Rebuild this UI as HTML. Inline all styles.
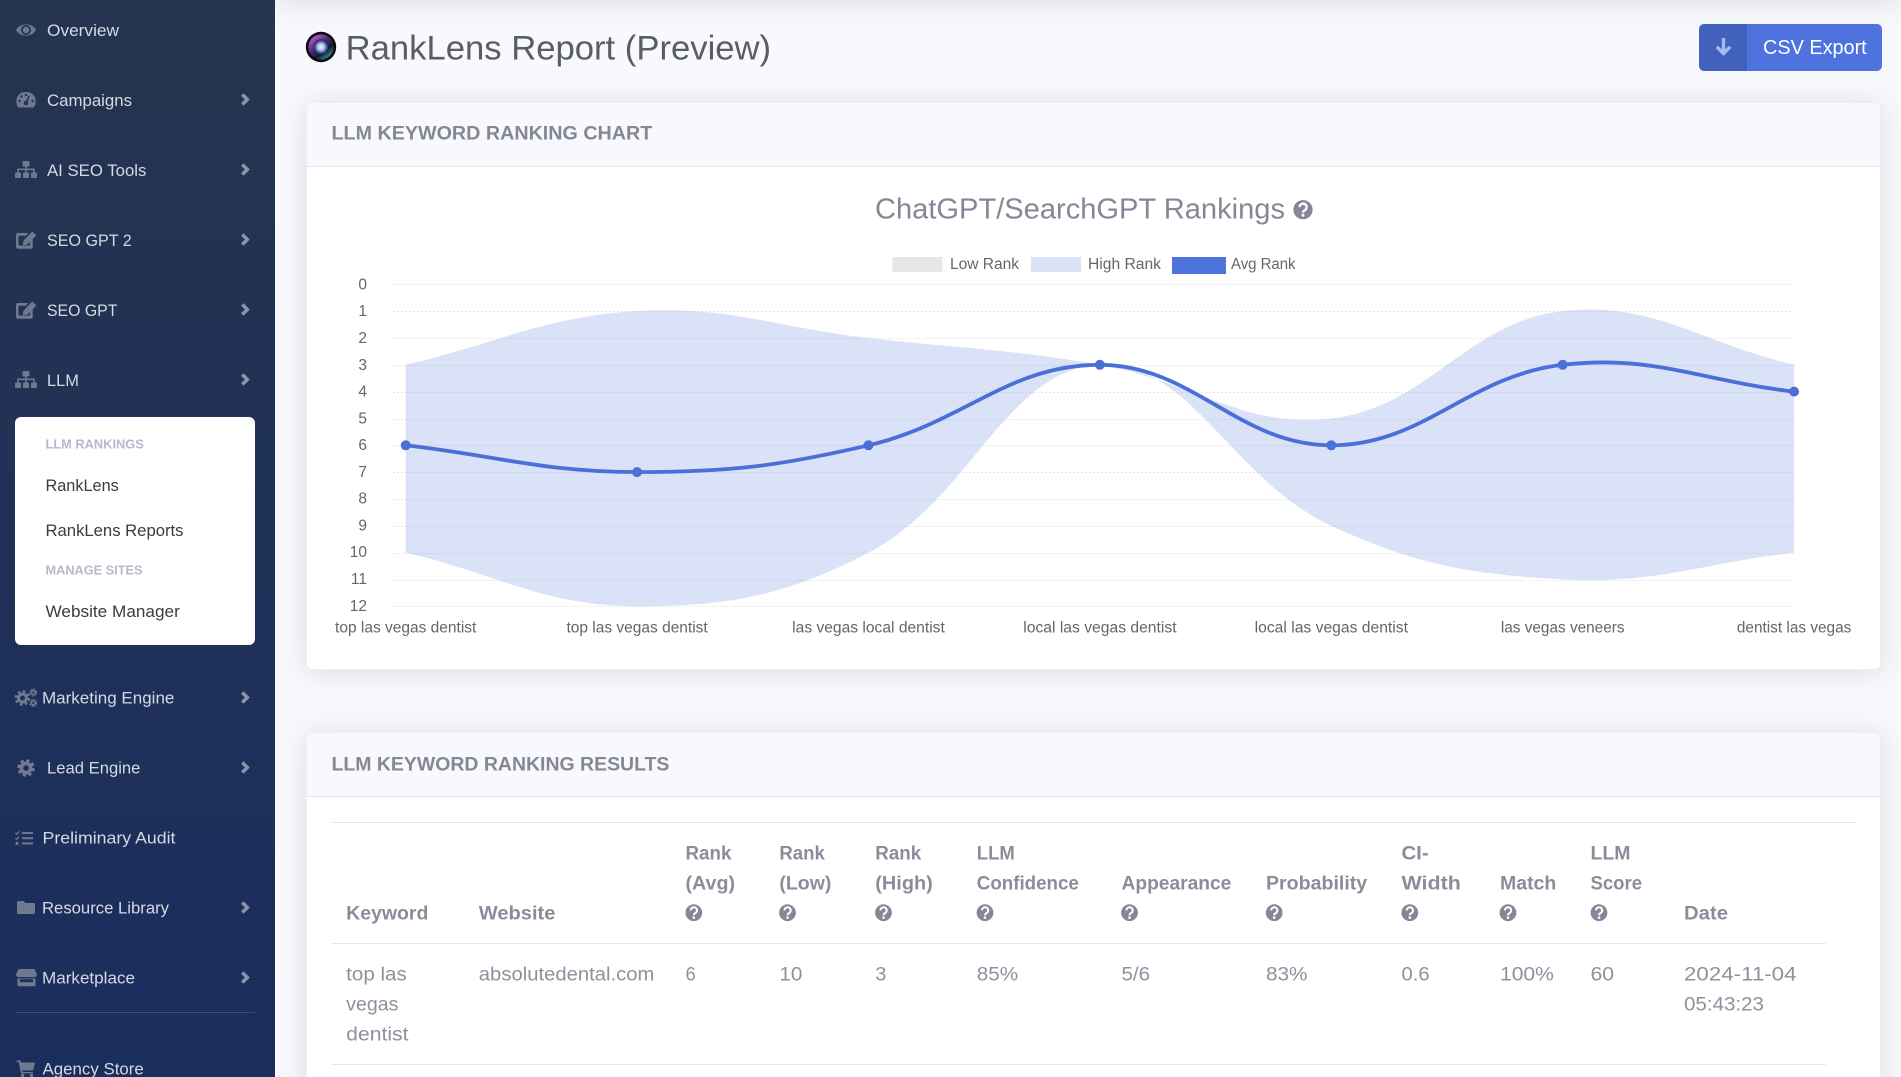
<!DOCTYPE html>
<html lang="en"><head><meta charset="utf-8"><title>RankLens Report (Preview)</title>
<style>
html,body{margin:0;padding:0;width:1901px;height:1077px;overflow:hidden;background:#f8f9fc;font-family:"Liberation Sans",sans-serif}
#page{position:relative;width:1901px;height:1077px;overflow:hidden;background:#f8f9fc}
.abs{position:absolute}
#side{left:0;top:0;width:275px;height:1077px;background:linear-gradient(180deg,#25344f 0%,#1a2e5e 100%)}
#topsh{left:275px;top:-60px;width:1626px;height:60px;box-shadow:0 2px 28px rgba(58,59,69,.15)}
#sub{left:15px;top:417px;width:240px;height:228px;background:#fff;border-radius:6px}
#div{left:15px;top:1012px;width:240px;height:1px;background:#3d4f78}
.card{left:306px;width:1575px;background:#fff;border:1px solid #eceef4;border-radius:6px;box-sizing:border-box;box-shadow:0 2.4px 28px rgba(58,59,69,.15);overflow:hidden}
.card .h{height:64px;box-sizing:border-box;background:#f8f9fc;border-bottom:1px solid #e3e6f0}
#c1{top:102px;height:568px}
#c2{top:732px;height:380px}
#btn{left:1699px;top:24px;width:183px;height:47px;background:#4e73df;border-radius:5px;overflow:hidden}
#btn div{width:48px;height:47px;background:rgba(0,0,0,.15)}
.ln{background:#e3e6f0;height:1px}
svg{position:absolute;left:0;top:0}
text{font-family:"Liberation Sans",sans-serif}
.n{font-size:16.5px;fill:#d5d9e2}
.m{font-size:16.5px;fill:#3a3b45}
.l{font-size:13px;font-weight:700;fill:#b7b9cc}
.c{font-size:15.5px;fill:#666}
.t{font-size:19px;fill:#8e909e}
.b{font-size:19px;font-weight:700;fill:#8a8c9a}
.ch{font-size:19px;font-weight:700;fill:#858796}
</style></head><body>
<div id="page">
<div class="abs" id="topsh"></div>
<div class="abs" id="side"></div>
<div class="abs" id="sub"></div>
<div class="abs" id="div"></div>
<div class="abs" id="btn"><div></div></div>
<div class="abs card" id="c1"><div class="h"></div></div>
<div class="abs card" id="c2"><div class="h"></div></div>
<div class="abs ln" style="left:331px;top:822px;width:1525px"></div>
<div class="abs ln" style="left:331px;top:943px;width:1495px"></div>
<div class="abs ln" style="left:331px;top:1064px;width:1495px"></div>
<svg width="1901" height="1077" viewBox="0 0 1901 1077" xmlns="http://www.w3.org/2000/svg">
<defs>
<radialGradient id="lens" cx="50%" cy="50%" r="50%">
<stop offset="0" stop-color="#eaf2fc"/><stop offset=".42" stop-color="#b0c6ea"/><stop offset=".72" stop-color="#5565a8"/><stop offset="1" stop-color="#1e1a3c"/>
</radialGradient>
<linearGradient id="ring" x1="0.1" y1="0.05" x2="0.85" y2="1">
<stop offset="0" stop-color="#d05ee0"/><stop offset=".42" stop-color="#4a2a78"/><stop offset=".68" stop-color="#141a34"/><stop offset="1" stop-color="#35b4c4"/>
</linearGradient>
</defs>

<!-- sidebar text -->
<text class="n" x="47" y="35.8" textLength="72" lengthAdjust="spacingAndGlyphs">Overview</text>
<text class="n" x="47" y="105.8" textLength="85" lengthAdjust="spacingAndGlyphs">Campaigns</text>
<text class="n" x="47" y="175.8" textLength="99.4" lengthAdjust="spacingAndGlyphs">AI SEO Tools</text>
<text class="n" x="47" y="245.8" textLength="84.7" lengthAdjust="spacingAndGlyphs">SEO GPT 2</text>
<text class="n" x="47" y="315.8" textLength="70.4" lengthAdjust="spacingAndGlyphs">SEO GPT</text>
<text class="n" x="47" y="385.8" textLength="32" lengthAdjust="spacingAndGlyphs">LLM</text>
<text class="l" x="45.5" y="448.5" textLength="98.3" lengthAdjust="spacingAndGlyphs">LLM RANKINGS</text>
<text class="m" x="45.5" y="490.8" textLength="73.3" lengthAdjust="spacingAndGlyphs">RankLens</text>
<text class="m" x="45.5" y="535.8" textLength="138" lengthAdjust="spacingAndGlyphs">RankLens Reports</text>
<text class="l" x="45.5" y="574.5" textLength="97" lengthAdjust="spacingAndGlyphs">MANAGE SITES</text>
<text class="m" x="45.5" y="616.8" textLength="134.3" lengthAdjust="spacingAndGlyphs">Website Manager</text>
<text class="n" x="42" y="703.5" textLength="132.4" lengthAdjust="spacingAndGlyphs">Marketing Engine</text>
<text class="n" x="47" y="773.5" textLength="93.4" lengthAdjust="spacingAndGlyphs">Lead Engine</text>
<text class="n" x="42.5" y="843.5" textLength="133" lengthAdjust="spacingAndGlyphs">Preliminary Audit</text>
<text class="n" x="42" y="913.5" textLength="127" lengthAdjust="spacingAndGlyphs">Resource Library</text>
<text class="n" x="42" y="983.5" textLength="93" lengthAdjust="spacingAndGlyphs">Marketplace</text>
<text class="n" x="42.5" y="1074.5" textLength="101.3" lengthAdjust="spacingAndGlyphs">Agency Store</text>

<!-- chevrons -->
<g fill="none" stroke="#8b94a8" stroke-width="3.5">
<path d="M242.3 94.5 L247.3 99.5 L242.3 104.5"/>
<path d="M242.3 164.5 L247.3 169.5 L242.3 174.5"/>
<path d="M242.3 234.5 L247.3 239.5 L242.3 244.5"/>
<path d="M242.3 304.5 L247.3 309.5 L242.3 314.5"/>
<path d="M242.3 374.5 L247.3 379.5 L242.3 384.5"/>
<path d="M242.3 692.5 L247.3 697.5 L242.3 702.5"/>
<path d="M242.3 762.5 L247.3 767.5 L242.3 772.5"/>
<path d="M242.3 902.5 L247.3 907.5 L242.3 912.5"/>
<path d="M242.3 972.5 L247.3 977.5 L242.3 982.5"/>
</g>

<!-- sidebar icons -->
<g fill="#6d7a90">
<!-- eye -->
<path d="M16 30 C20 22.5 32 22.5 36 30 C32 37.5 20 37.5 16 30Z"/>
<circle cx="26" cy="30" r="5" fill="#243450"/><circle cx="26" cy="30" r="3.2"/>
<!-- gauge -->
<path d="M18.5 107.5 C14.5 103 15.5 92 26 92 C36.5 92 37.5 103 33.5 107.5Z"/>
<g fill="#243450"><circle cx="26" cy="103" r="2.3"/><circle cx="19.5" cy="101" r="1.2"/><circle cx="21.5" cy="96.5" r="1.2"/><circle cx="26" cy="95" r="1.2"/><circle cx="32.5" cy="101" r="1.2"/></g>
<path d="M25.3 103 L28.5 95.5 L29.8 96 L27 103.5Z" fill="#243450"/>
<!-- sitemap -->
<g><rect x="22.5" y="161" width="7" height="5.5" rx="1"/><rect x="15" y="172.5" width="6" height="5.5" rx="1"/><rect x="23" y="172.5" width="6" height="5.5" rx="1"/><rect x="31" y="172.5" width="6" height="5.5" rx="1"/><path d="M25.2 166h1.6v2.5H34.8v4H33.2v-2.4H26.8v2.4H25.2v-2.4H18.8v2.4H17.2v-4H25.2z"/></g>
<g><rect x="22.5" y="371" width="7" height="5.5" rx="1"/><rect x="15" y="382.5" width="6" height="5.5" rx="1"/><rect x="23" y="382.5" width="6" height="5.5" rx="1"/><rect x="31" y="382.5" width="6" height="5.5" rx="1"/><path d="M25.2 376h1.6v2.5H34.8v4H33.2v-2.4H26.8v2.4H25.2v-2.4H18.8v2.4H17.2v-4H25.2z"/></g>
<!-- edit -->
<path d="M16 235 a2 2 0 0 1 2-2 h10.5 l-2.6 2.7 h-7.4 v9.8 h11.5 v-5 l2.7-2.8 v9.1 a2 2 0 0 1-2 2 h-12.7 a2 2 0 0 1-2-2z"/>
<path d="M23.5 240.5 l8.8-9 l4 4 l-8.8 9 l-4.7 .8z"/>
<path d="M16 305 a2 2 0 0 1 2-2 h10.5 l-2.6 2.7 h-7.4 v9.8 h11.5 v-5 l2.7-2.8 v9.1 a2 2 0 0 1-2 2 h-12.7 a2 2 0 0 1-2-2z"/>
<path d="M23.5 310.5 l8.8-9 l4 4 l-8.8 9 l-4.7 .8z"/>
<!-- cogs -->
<circle cx="22.5" cy="698" r="5.5"/>
<circle cx="22.5" cy="698" r="6.3" fill="none" stroke="#6d7a90" stroke-width="3" stroke-dasharray="2.6 2.35"/>
<circle cx="22.5" cy="698" r="2.4" fill="#1f3058"/>
<circle cx="33.3" cy="692.5" r="2.5"/>
<circle cx="33.3" cy="692.5" r="3.2" fill="none" stroke="#6d7a90" stroke-width="1.8" stroke-dasharray="1.4 1.1"/>
<circle cx="33.3" cy="692.5" r="1.1" fill="#1f3058"/>
<circle cx="33.3" cy="703" r="2.5"/>
<circle cx="33.3" cy="703" r="3.2" fill="none" stroke="#6d7a90" stroke-width="1.8" stroke-dasharray="1.4 1.1"/>
<circle cx="33.3" cy="703" r="1.1" fill="#1f3058"/>
<!-- cog -->
<circle cx="26" cy="768" r="6.5"/>
<circle cx="26" cy="768" r="7.3" fill="none" stroke="#6d7a90" stroke-width="3" stroke-dasharray="3.2 2.53"/>
<circle cx="26" cy="768" r="2.8" fill="#1d2f5a"/>
<!-- tasks -->
<rect x="22" y="832" width="11" height="2"/><rect x="22" y="837.2" width="11" height="2"/><rect x="22" y="842.4" width="11" height="2"/>
<path d="M15.5 833 l1.2 1.2 2.6-2.8" fill="none" stroke="#6d7a90" stroke-width="1.2"/><path d="M15.5 838.2 l1.2 1.2 2.6-2.8" fill="none" stroke="#6d7a90" stroke-width="1.2"/><circle cx="17" cy="843.4" r="1.6"/>
<!-- folder -->
<path d="M17 902.5 a1.5 1.5 0 0 1 1.5-1.5 h5 l2 2 h8 a1.5 1.5 0 0 1 1.5 1.5 v8 a1.5 1.5 0 0 1-1.5 1.5 h-15 a1.5 1.5 0 0 1-1.5-1.5z"/>
<!-- store -->
<path d="M18.5 969 h16 l2.5 5.5 q0 2.6-3.4 2.6 h-14.2 q-3.4 0-3.4-2.6z"/>
<path d="M17.5 978.5 h18 v6.5 a1.2 1.2 0 0 1-1.2 1.2 h-15.6 a1.2 1.2 0 0 1-1.2-1.2z"/>
<rect x="20" y="979.2" width="13" height="3" fill="#1c2f5b"/>
<!-- cart -->
<path d="M17 1060.5 h3.4 l.6 2 h14 l-1.9 8 h-11 l.3 1.5 h10.5 v1.4 h-12 l-2.3-11.5 h-2.6z"/>
<circle cx="22.5" cy="1075.5" r="1.7"/><circle cx="31.5" cy="1075.5" r="1.7"/>
</g>

<!-- header -->
<circle cx="321" cy="47" r="15.2" fill="#0a0a10"/>
<circle cx="321" cy="47" r="12.6" fill="url(#ring)"/>
<circle cx="321" cy="47" r="7.6" fill="url(#lens)"/>
<text x="345.6" y="59.6" font-size="34" fill="#5a5c69" textLength="425.5" lengthAdjust="spacingAndGlyphs">RankLens Report (Preview)</text>
<path d="M1723.5 38 V53.5 M1716.8 46.8 l6.7 6.7 6.7-6.7" fill="none" stroke="#a7b9ef" stroke-width="3.4"/>
<text x="1763" y="54" font-size="20" fill="#fff" textLength="103.7" lengthAdjust="spacingAndGlyphs">CSV Export</text>

<!-- card 1 -->
<text class="ch" x="331.5" y="139.7" textLength="320.8" lengthAdjust="spacingAndGlyphs">LLM KEYWORD RANKING CHART</text>
<text x="875" y="218.7" font-size="29" fill="#858796" textLength="410" lengthAdjust="spacingAndGlyphs">ChatGPT/SearchGPT Rankings</text>
<g transform="translate(1303 209.7)"><circle r="9.6" fill="#858796"/><path d="M-3.4-2.6a3.5 3.5 0 1 1 5.3 3c-1.2.7-1.9 1.2-1.9 2.6" fill="none" stroke="#fff" stroke-width="2.3"/><circle cy="5.6" r="1.5" fill="#fff"/></g>

<!-- legend -->
<rect x="892.5" y="257" width="50" height="15" fill="#e6e6e6"/>
<text class="c" x="950" y="269" textLength="69" lengthAdjust="spacingAndGlyphs">Low Rank</text>
<rect x="1031" y="257" width="50" height="15" fill="#d9e2f7"/>
<text class="c" x="1088" y="269" textLength="73" lengthAdjust="spacingAndGlyphs">High Rank</text>
<rect x="1172" y="257" width="54" height="17" fill="#4e73df"/>
<text class="c" x="1231" y="269" textLength="64.5" lengthAdjust="spacingAndGlyphs">Avg Rank</text>

<!-- grid -->
<g stroke="#e6e6e6" stroke-width="1" stroke-dasharray="2 2">
<path d="M393 284.5H1794M393 311.5H1794M393 338.5H1794M393 365.5H1794M393 392.5H1794M393 419.5H1794M393 445.5H1794M393 472.5H1794M393 499.5H1794M393 526.5H1794M393 553.5H1794M393 580.5H1794M393 606.5H1794"/>
</g>
<!-- y labels -->
<g text-anchor="end">
<text class="c" x="367" y="289.3">0</text><text class="c" x="367" y="316">1</text><text class="c" x="367" y="343">2</text><text class="c" x="367" y="369.8">3</text><text class="c" x="367" y="396.5">4</text><text class="c" x="367" y="423.3">5</text><text class="c" x="367" y="450">6</text><text class="c" x="367" y="476.8">7</text><text class="c" x="367" y="503.6">8</text><text class="c" x="367" y="530.5">9</text><text class="c" x="367" y="557.2">10</text><text class="c" x="367" y="584">11</text><text class="c" x="367" y="610.8">12</text>
</g>
<!-- x labels -->
<g text-anchor="middle">
<text class="c" x="405.7" y="632.3" textLength="141.3" lengthAdjust="spacingAndGlyphs">top las vegas dentist</text>
<text class="c" x="637.1" y="632.3" textLength="141.3" lengthAdjust="spacingAndGlyphs">top las vegas dentist</text>
<text class="c" x="868.5" y="632.3" textLength="152.6" lengthAdjust="spacingAndGlyphs">las vegas local dentist</text>
<text class="c" x="1099.9" y="632.3" textLength="153.3" lengthAdjust="spacingAndGlyphs">local las vegas dentist</text>
<text class="c" x="1331.3" y="632.3" textLength="153.3" lengthAdjust="spacingAndGlyphs">local las vegas dentist</text>
<text class="c" x="1562.7" y="632.3" textLength="123.7" lengthAdjust="spacingAndGlyphs">las vegas veneers</text>
<text class="c" x="1794.1" y="632.3" textLength="114.5" lengthAdjust="spacingAndGlyphs">dentist las vegas</text>
</g>
<!-- range fill -->
<path fill="#466fd6" fill-opacity=".2" d="M405.7 364.8 C498.3 343.3 543.7 316.5 637.1 311.1 C728.8 305.8 775.9 327.3 868.5 338 C961.1 348.7 1008.3 348.9 1099.9 364.8 C1193.4 381.1 1242.1 428.9 1331.3 418.5 C1427.2 407.4 1466.8 322.2 1562.7 311.1 C1651.9 300.7 1701.5 343.3 1794.1 364.8 L1794.1 552.6 C1701.5 563.3 1654.3 584.7 1562.7 579.4 C1469.2 574 1415.9 565 1331.3 525.8 C1230.8 479.2 1189.9 359.6 1099.9 364.8 C1004.7 370.3 971.5 498.8 868.5 552.6 C786.4 595.4 729.7 606.3 637.1 606.3 C544.5 606.3 498.3 574.1 405.7 552.6 Z"/>
<!-- avg line -->
<path fill="none" stroke="#4a6fd8" stroke-width="3.8" d="M405.7 445.3 C498.3 456 544.5 472.1 637.1 472.1 C729.7 472.1 778.3 466.2 868.5 445.3 C963.4 423.3 1007.3 364.8 1099.9 364.8 C1192.5 364.8 1238.7 445.3 1331.3 445.3 C1423.9 445.3 1467.8 375.8 1562.7 364.8 C1652.9 354.3 1701.5 380.9 1794.1 391.6"/>
<g fill="#4a6fd8">
<circle cx="405.7" cy="445.3" r="5"/><circle cx="637.1" cy="472.1" r="5"/><circle cx="868.5" cy="445.3" r="5"/><circle cx="1099.9" cy="364.8" r="5"/><circle cx="1331.3" cy="445.3" r="5"/><circle cx="1562.7" cy="364.8" r="5"/><circle cx="1794.1" cy="391.6" r="5"/>
</g>

<!-- card 2 -->
<text class="ch" x="331.5" y="770.6" textLength="337.9" lengthAdjust="spacingAndGlyphs">LLM KEYWORD RANKING RESULTS</text>
<!-- table head -->
<text class="b" x="346.2" y="919.3" textLength="82.2" lengthAdjust="spacingAndGlyphs">Keyword</text>
<text class="b" x="478.8" y="919.3" textLength="76.6" lengthAdjust="spacingAndGlyphs">Website</text>
<text class="b" x="685.5" y="859.3" textLength="45.9" lengthAdjust="spacingAndGlyphs">Rank</text>
<text class="b" x="685.5" y="889.3" textLength="49.5" lengthAdjust="spacingAndGlyphs">(Avg)</text>
<text class="b" x="779.4" y="859.3" textLength="45.4" lengthAdjust="spacingAndGlyphs">Rank</text>
<text class="b" x="779.4" y="889.3" textLength="52" lengthAdjust="spacingAndGlyphs">(Low)</text>
<text class="b" x="875.3" y="859.3" textLength="45.9" lengthAdjust="spacingAndGlyphs">Rank</text>
<text class="b" x="875.3" y="889.3" textLength="57.5" lengthAdjust="spacingAndGlyphs">(High)</text>
<text class="b" x="976.8" y="859.3" textLength="38" lengthAdjust="spacingAndGlyphs">LLM</text>
<text class="b" x="976.8" y="889.3" textLength="102" lengthAdjust="spacingAndGlyphs">Confidence</text>
<text class="b" x="1121.5" y="889.3" textLength="109.8" lengthAdjust="spacingAndGlyphs">Appearance</text>
<text class="b" x="1266" y="889.3" textLength="101.2" lengthAdjust="spacingAndGlyphs">Probability</text>
<text class="b" x="1401.5" y="859.3" textLength="27.1" lengthAdjust="spacingAndGlyphs">CI-</text>
<text class="b" x="1401.5" y="889.3" textLength="59.3" lengthAdjust="spacingAndGlyphs">Width</text>
<text class="b" x="1500" y="889.3" textLength="56.3" lengthAdjust="spacingAndGlyphs">Match</text>
<text class="b" x="1590.5" y="859.3" textLength="39.9" lengthAdjust="spacingAndGlyphs">LLM</text>
<text class="b" x="1590.5" y="889.3" textLength="51.5" lengthAdjust="spacingAndGlyphs">Score</text>
<text class="b" x="1684" y="919.3" textLength="44" lengthAdjust="spacingAndGlyphs">Date</text>
<!-- ? icons -->
<g transform="translate(693.8 912.7)"><circle r="8.4" fill="#858796"/><path d="M-3-2.3a3.1 3.1 0 1 1 4.7 2.6c-1 .6-1.7 1-1.7 2.3" fill="none" stroke="#fff" stroke-width="2"/><circle cy="4.9" r="1.3" fill="#fff"/></g>
<g transform="translate(787.5 912.7)"><circle r="8.4" fill="#858796"/><path d="M-3-2.3a3.1 3.1 0 1 1 4.7 2.6c-1 .6-1.7 1-1.7 2.3" fill="none" stroke="#fff" stroke-width="2"/><circle cy="4.9" r="1.3" fill="#fff"/></g>
<g transform="translate(883.5 912.7)"><circle r="8.4" fill="#858796"/><path d="M-3-2.3a3.1 3.1 0 1 1 4.7 2.6c-1 .6-1.7 1-1.7 2.3" fill="none" stroke="#fff" stroke-width="2"/><circle cy="4.9" r="1.3" fill="#fff"/></g>
<g transform="translate(985 912.7)"><circle r="8.4" fill="#858796"/><path d="M-3-2.3a3.1 3.1 0 1 1 4.7 2.6c-1 .6-1.7 1-1.7 2.3" fill="none" stroke="#fff" stroke-width="2"/><circle cy="4.9" r="1.3" fill="#fff"/></g>
<g transform="translate(1129.5 912.7)"><circle r="8.4" fill="#858796"/><path d="M-3-2.3a3.1 3.1 0 1 1 4.7 2.6c-1 .6-1.7 1-1.7 2.3" fill="none" stroke="#fff" stroke-width="2"/><circle cy="4.9" r="1.3" fill="#fff"/></g>
<g transform="translate(1274.2 912.7)"><circle r="8.4" fill="#858796"/><path d="M-3-2.3a3.1 3.1 0 1 1 4.7 2.6c-1 .6-1.7 1-1.7 2.3" fill="none" stroke="#fff" stroke-width="2"/><circle cy="4.9" r="1.3" fill="#fff"/></g>
<g transform="translate(1409.8 912.7)"><circle r="8.4" fill="#858796"/><path d="M-3-2.3a3.1 3.1 0 1 1 4.7 2.6c-1 .6-1.7 1-1.7 2.3" fill="none" stroke="#fff" stroke-width="2"/><circle cy="4.9" r="1.3" fill="#fff"/></g>
<g transform="translate(1508 912.7)"><circle r="8.4" fill="#858796"/><path d="M-3-2.3a3.1 3.1 0 1 1 4.7 2.6c-1 .6-1.7 1-1.7 2.3" fill="none" stroke="#fff" stroke-width="2"/><circle cy="4.9" r="1.3" fill="#fff"/></g>
<g transform="translate(1599 912.7)"><circle r="8.4" fill="#858796"/><path d="M-3-2.3a3.1 3.1 0 1 1 4.7 2.6c-1 .6-1.7 1-1.7 2.3" fill="none" stroke="#fff" stroke-width="2"/><circle cy="4.9" r="1.3" fill="#fff"/></g>
<!-- table row -->
<text class="t" x="346.2" y="980.3" textLength="60.6" lengthAdjust="spacingAndGlyphs">top las</text>
<text class="t" x="346.2" y="1010.3" textLength="52.2" lengthAdjust="spacingAndGlyphs">vegas</text>
<text class="t" x="346.2" y="1040.3" textLength="62.3" lengthAdjust="spacingAndGlyphs">dentist</text>
<text class="t" x="478.8" y="980.3" textLength="175.6" lengthAdjust="spacingAndGlyphs">absolutedental.com</text>
<text class="t" x="685.5" y="980.3" textLength="10.3" lengthAdjust="spacingAndGlyphs">6</text>
<text class="t" x="779.4" y="980.3" textLength="23" lengthAdjust="spacingAndGlyphs">10</text>
<text class="t" x="875.3" y="980.3" textLength="11.2" lengthAdjust="spacingAndGlyphs">3</text>
<text class="t" x="976.8" y="980.3" textLength="41.4" lengthAdjust="spacingAndGlyphs">85%</text>
<text class="t" x="1121.5" y="980.3" textLength="28.5" lengthAdjust="spacingAndGlyphs">5/6</text>
<text class="t" x="1266" y="980.3" textLength="41.5" lengthAdjust="spacingAndGlyphs">83%</text>
<text class="t" x="1401.5" y="980.3" textLength="28.1" lengthAdjust="spacingAndGlyphs">0.6</text>
<text class="t" x="1500" y="980.3" textLength="53.8" lengthAdjust="spacingAndGlyphs">100%</text>
<text class="t" x="1590.5" y="980.3" textLength="23.5" lengthAdjust="spacingAndGlyphs">60</text>
<text class="t" x="1684" y="980.3" textLength="112.5" lengthAdjust="spacingAndGlyphs">2024-11-04</text>
<text class="t" x="1684" y="1010.3" textLength="80" lengthAdjust="spacingAndGlyphs">05:43:23</text>
</svg>
</div>
</body></html>
